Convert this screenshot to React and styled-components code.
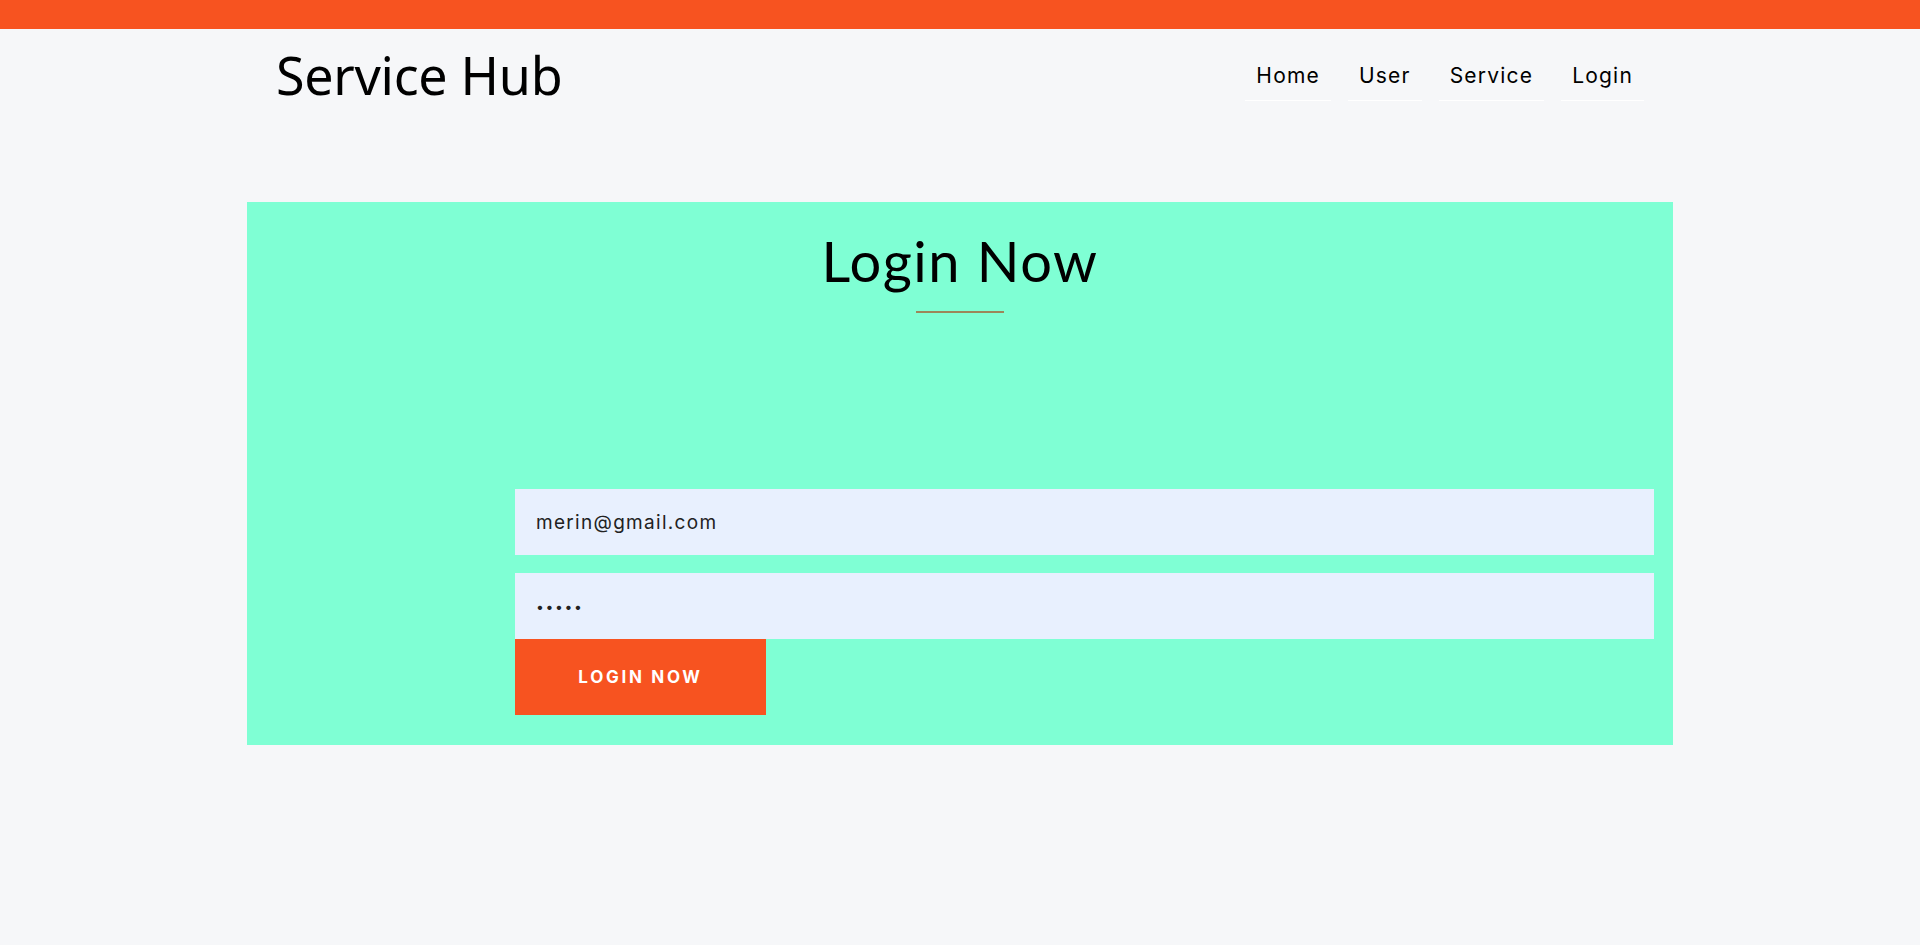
import React from 'react';
import styled, { createGlobalStyle } from 'styled-components';

const GlobalStyle = createGlobalStyle`
  body {
    margin: 0;
    background-color: #f6f7f9;
    font-family: "Inter", "Noto Sans", sans-serif;
  }
  * { box-sizing: border-box; }
`;

const TopBar = styled.div`
  height: 29px;
  background-color: #f75320;
`;

const Header = styled.header`
  width: 1426px;
  margin: 0 auto;
  padding: 0 29px;
  height: 90px;
  display: flex;
  align-items: center;
  justify-content: space-between;
`;

const Logo = styled.div`
  font-family: "Noto Sans", sans-serif;
  font-size: 52px;
  font-weight: 400;
  color: #000;
  letter-spacing: -0.3px;
`;

const Nav = styled.nav`
  display: flex;
  gap: 17px;
`;

const NavLink = styled.a`
  display: block;
  padding: 13px 11px 9px;
  line-height: 30px;
  font-size: 21px;
  font-weight: 400;
  letter-spacing: 1.2px;
  color: #000;
  text-decoration: none;
  border-bottom: 1px solid #ffffff;
  cursor: pointer;
`;

const Panel = styled.section`
  width: 1426px;
  margin: 83px auto 0;
  background-color: #7fffd4;
  padding: 25px 19px 30px 268px;
`;

const TitleWrap = styled.div`
  margin-left: -249px;
  display: flex;
  flex-direction: column;
  align-items: center;
`;

const Title = styled.h1`
  margin: 0;
  font-family: "Lato", sans-serif;
  font-weight: 400;
  font-size: 56px;
  line-height: 67px;
  letter-spacing: 1.5px;
  color: #000;
`;

const Underline = styled.div`
  width: 88px;
  height: 2px;
  margin-top: 17px;
  background-color: #9c8759;
`;

const Form = styled.form`
  margin-top: 176px;
  display: flex;
  flex-direction: column;
`;

const Input = styled.input`
  height: 66px;
  border: none;
  outline: none;
  background-color: #e8f0fe;
  padding: 0 21px;
  font-family: "Inter", sans-serif;
  font-size: ${p => (p.$dots ? 14 : 19)}px;
  letter-spacing: ${p => (p.$dots ? 1.6 : 1.3)}px;
  color: #222;
  margin-bottom: ${p => p.$gap || 0}px;
`;

const Button = styled.button`
  width: 251px;
  height: 76px;
  border: none;
  background-color: #f75320;
  color: #fff;
  font-family: "Inter", sans-serif;
  font-weight: 700;
  font-size: 17px;
  letter-spacing: 2.7px;
  text-transform: uppercase;
  cursor: pointer;
`;

const App = () => {
  return (
    <>
      <GlobalStyle />
      <TopBar />
      <Header>
        <Logo>Service Hub</Logo>
        <Nav>
          <NavLink>Home</NavLink>
          <NavLink>User</NavLink>
          <NavLink>Service</NavLink>
          <NavLink>Login</NavLink>
        </Nav>
      </Header>
      <Panel>
        <TitleWrap>
          <Title>Login Now</Title>
          <Underline />
        </TitleWrap>
        <Form onSubmit={e => e.preventDefault()}>
          <Input $gap={18} type="email" defaultValue="merin@gmail.com" />
          <Input $dots type="password" defaultValue="12345" />
          <Button type="submit">Login Now</Button>
        </Form>
      </Panel>
    </>
  );
};

export default App;
